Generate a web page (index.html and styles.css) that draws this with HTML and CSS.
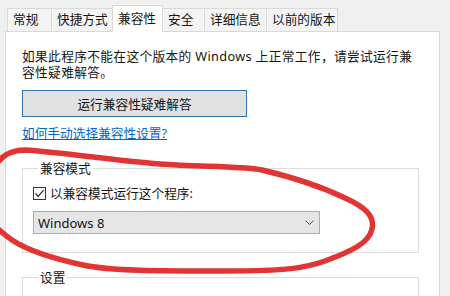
FILE: index.html
```html
<!DOCTYPE html>
<html lang="zh-CN">
<head>
<meta charset="utf-8">
<link rel="stylesheet" href="styles.css">
</head>
<body>
<div class="window">
  <div class="tabs">
    <div class="tab t1">常规</div>
    <div class="tab t2">快捷方式</div>
    <div class="tab t3 active">兼容性</div>
    <div class="tab t4">安全</div>
    <div class="tab t5">详细信息</div>
    <div class="tab t6">以前的版本</div>
  </div>
  <div class="panel">
    <p class="intro">如果此程序不能在这个版本的 Windows 上正常工作，请尝试运行兼容性疑难解答。</p>
    <button class="btn">运行兼容性疑难解答</button>
    <a class="link" href="#">如何手动选择兼容性设置?</a>
    <fieldset class="group g1">
      <legend>兼容模式</legend>
      <label class="check-row">
        <span class="checkbox"><svg width="11" height="11" viewBox="0 0 11 11"><polyline points="1.5,5.5 4.2,8.3 9.6,2.2" fill="none" stroke="#222" stroke-width="1.2"/></svg></span>
        <span>以兼容模式运行这个程序:</span>
      </label>
      <div class="select">
        <span>Windows 8</span>
        <svg class="chev" width="9" height="5" viewBox="0 0 9 5"><polyline points="0.5,0.5 4.5,4.5 8.5,0.5" fill="none" stroke="#555" stroke-width="1"/></svg>
      </div>
    </fieldset>
    <fieldset class="group g2">
      <legend>设置</legend>
    </fieldset>
  </div>
  <svg class="mark" width="450" height="296" viewBox="0 0 450 296">
    <path d="M -8 172 C -2 158, 8 150, 25 150 C 60 152, 110 160, 160 164 C 200 167, 240 166, 262 170 C 292 177, 320 186, 345 198 C 365 207, 375 216, 372 229 C 369 243, 352 251, 325 261 C 305 268, 288 271, 225 271 C 160 271, 110 271, 83 265 C 55 259, 30 252, 12 240 C 2 233, -4 228, -8 222" fill="none" stroke="#e33434" stroke-width="5.5" stroke-linecap="round" stroke-linejoin="round"/>
  </svg>
</div>
</body>
</html>
```
FILE: styles.css
```css
html, body {
  margin: 0;
  padding: 0;
}
body {
  background: #f0f0f0;
  font-family: "Noto Sans", "Noto Sans CJK SC", sans-serif;
  font-size: 12.7px;
  color: #151515;
  width: 450px;
  height: 296px;
  overflow: hidden;
}
.window {
  position: relative;
  width: 450px;
  height: 296px;
  overflow: hidden;
}
.tabs {
  display: flex;
  align-items: flex-end;
  height: 31px;
  padding-left: 7px;
  position: relative;
  z-index: 2;
}
.tab {
  box-sizing: border-box;
  height: 23px;
  line-height: 21px;
  padding-left: 5px;
  background: #f4f4f4;
  border: 1px solid #d9d9d9;
  border-bottom: none;
  margin-right: -1px;
  white-space: nowrap;
}
.t1 { width: 45px; }
.t2 { width: 62px; }
.t3 { width: 51px; }
.t4 { width: 43px; }
.t5 { width: 63px; }
.t6 { width: 72px; }
.tab.active {
  height: 27px;
  background: #fff;
  line-height: 25px;
  margin-bottom: -1px;
  position: relative;
  z-index: 3;
}
.panel {
  box-sizing: border-box;
  margin-left: 5px;
  width: 435px;
  height: 280px;
  background: #fff;
  border: 1px solid #d9d9d9;
  padding: 16px 0 0 16px;
  position: relative;
  z-index: 1;
}
.intro {
  margin: 0;
  width: 398px;
  line-height: 16px;
  letter-spacing: 0.36px;
}
.btn {
  display: block;
  box-sizing: border-box;
  margin-top: 10px;
  width: 225px;
  height: 27px;
  background: #e1e1e1;
  border: 1px solid #2f74ad;
  border-radius: 0;
  font: inherit;
  color: #151515;
  padding: 0;
}
.link {
  display: block;
  margin-top: 8px;
  line-height: 16px;
  color: #0066cc;
  text-decoration: underline;
  width: max-content;
}
.group {
  box-sizing: border-box;
  width: 397px;
  margin: 19px 0 0 0;
  padding: 9px 0 18px 10px;
  border: 1px solid #dcdcdc;
  border-radius: 0;
  min-width: 0;
}
.group legend {
  padding: 0 2px;
  margin-left: 5px;
  line-height: 16px;
}
.g2 {
  margin-top: 16px;
  height: 60px;
}
.check-row {
  display: flex;
  align-items: center;
  gap: 4px;
  line-height: 16px;
  height: 16px;
}
.checkbox {
  box-sizing: border-box;
  width: 13px;
  height: 13px;
  border: 1px solid #333;
  display: flex;
  align-items: center;
  justify-content: center;
  background: #fff;
}
.select {
  box-sizing: border-box;
  margin-top: 10px;
  width: 287px;
  height: 23px;
  background: #e5e5e5;
  border: 1px solid #adadad;
  display: flex;
  align-items: center;
  justify-content: space-between;
  padding: 0 5px 0 4px;
}
.select span {
  font-size: 13px;
}
.chev {
  display: block;
}
.mark {
  position: absolute;
  left: 0;
  top: 0;
  z-index: 5;
  pointer-events: none;
}
```
